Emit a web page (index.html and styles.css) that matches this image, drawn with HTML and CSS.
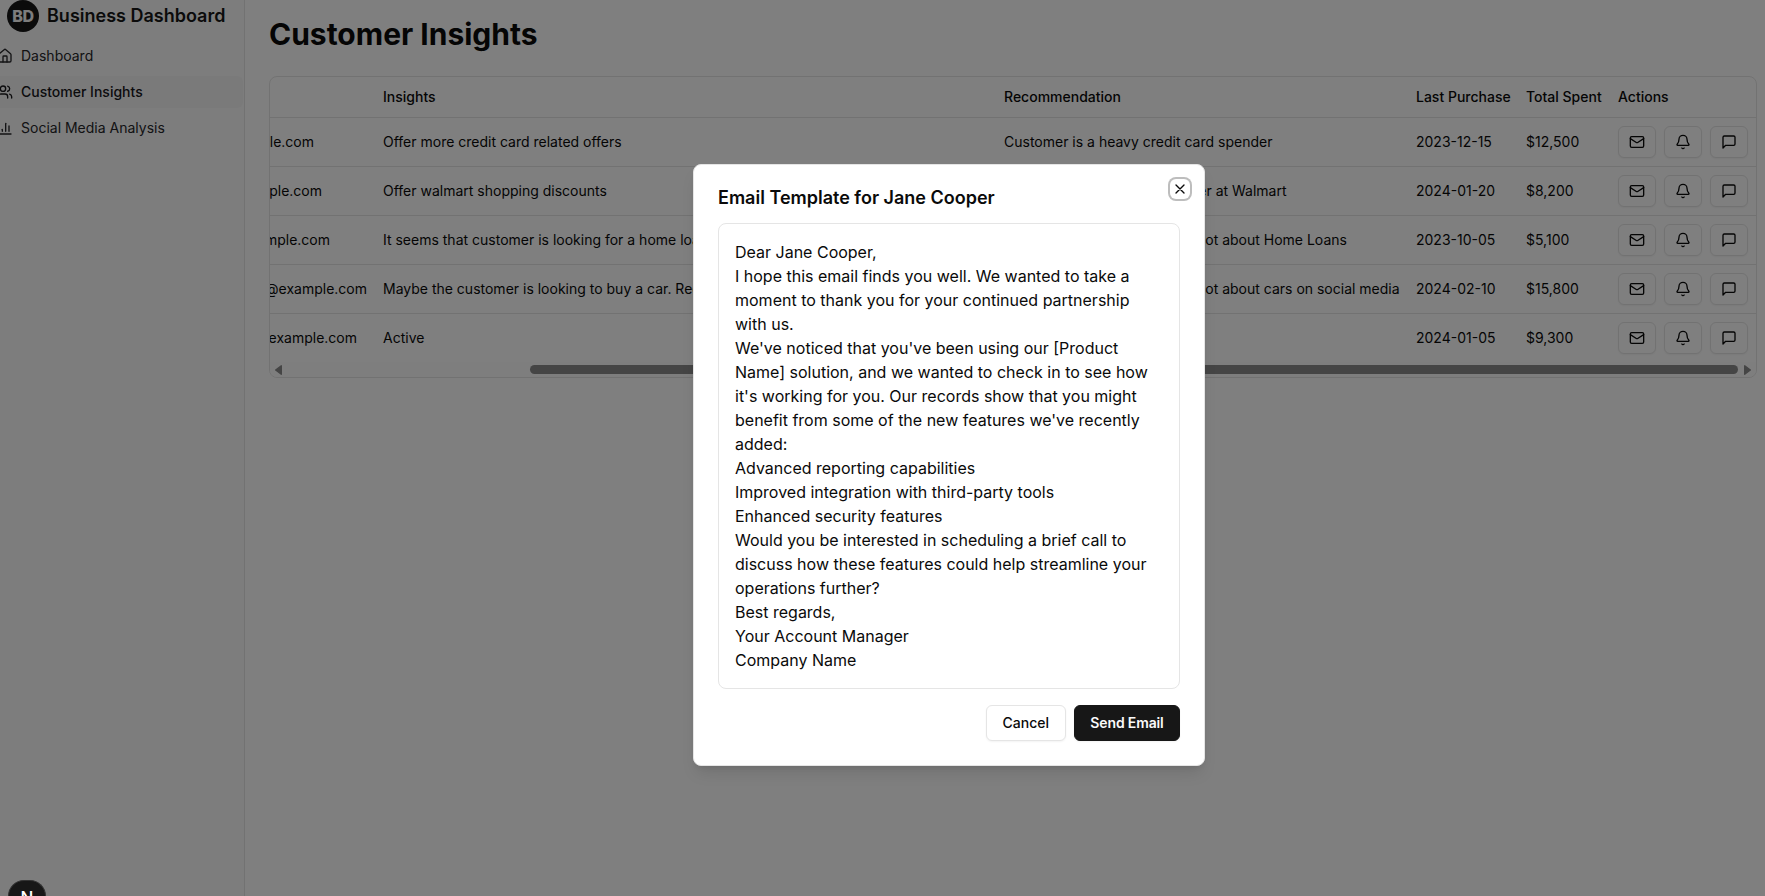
FILE: index.html
```
<!DOCTYPE html>
<html lang="en">
<head>
<meta charset="utf-8">
<title>Business Dashboard</title>
<link rel="stylesheet" href="styles.css">
</head>
<body>
<svg class="sprite" aria-hidden="true">
  <symbol id="mail" viewBox="0 0 24 24"><rect width="20" height="16" x="2" y="4" rx="2"/><path d="m22 7-8.97 5.7a1.94 1.94 0 0 1-2.06 0L2 7"/></symbol>
  <symbol id="bell" viewBox="0 0 24 24"><path d="M10.268 21a2 2 0 0 0 3.464 0"/><path d="M3.262 15.326A1 1 0 0 0 4 17h16a1 1 0 0 0 .74-1.673C19.41 13.956 18 12.499 18 8A6 6 0 0 0 6 8c0 4.499-1.411 5.956-2.738 7.326"/></symbol>
  <symbol id="message" viewBox="0 0 24 24"><path d="M21 15a2 2 0 0 1-2 2H7l-4 4V5a2 2 0 0 1 2-2h14a2 2 0 0 1 2 2z"/></symbol>
</svg>
<div class="app">
  <aside class="sidebar">
    <div class="brand"><span class="avatar">BD</span><span class="brand-name">Business Dashboard</span></div>
    <nav class="menu">
      <a class="menu-item"><svg class="icon" viewBox="0 0 24 24"><path d="M15 21v-8a1 1 0 0 0-1-1h-4a1 1 0 0 0-1 1v8"/><path d="M3 10a2 2 0 0 1 .709-1.528l7-5.999a2 2 0 0 1 2.582 0l7 5.999A2 2 0 0 1 21 10v9a2 2 0 0 1-2 2H5a2 2 0 0 1-2-2z"/></svg>Dashboard</a>
      <a class="menu-item active"><svg class="icon" viewBox="0 0 24 24"><path d="M16 21v-2a4 4 0 0 0-4-4H6a4 4 0 0 0-4 4v2"/><circle cx="9" cy="7" r="4"/><path d="M22 21v-2a4 4 0 0 0-3-3.87"/><path d="M16 3.13a4 4 0 0 1 0 7.75"/></svg>Customer Insights</a>
      <a class="menu-item"><svg class="icon" viewBox="0 0 24 24"><path d="M3 3v16a2 2 0 0 0 2 2h16"/><path d="M18 17V9"/><path d="M13 17V5"/><path d="M8 17v-3"/></svg>Social Media Analysis</a>
    </nav>
  </aside>
  <main class="main">
    <h1 class="page-title">Customer Insights</h1>
    <section class="table-card">
      <div class="row head"><div class="cell"></div><div class="cell">Insights</div><div class="cell">Recommendation</div><div class="cell">Last Purchase</div><div class="cell">Total Spent</div><div class="cell">Actions</div></div>
      <div class="row"><div class="cell email e1">le.com</div><div class="cell">Offer more credit card related offers</div><div class="cell">Customer is a heavy credit card spender</div><div class="cell">2023-12-15</div><div class="cell">$12,500</div><div class="cell actions"><button class="act"><svg class="icon"><use href="#mail"/></svg></button><button class="act"><svg class="icon"><use href="#bell"/></svg></button><button class="act"><svg class="icon"><use href="#message"/></svg></button></div></div>
      <div class="row"><div class="cell email e2">ple.com</div><div class="cell">Offer walmart shopping discounts</div><div class="cell tight">Customer is a frequent shopper at Walmart</div><div class="cell">2024-01-20</div><div class="cell">$8,200</div><div class="cell actions"><button class="act"><svg class="icon"><use href="#mail"/></svg></button><button class="act"><svg class="icon"><use href="#bell"/></svg></button><button class="act"><svg class="icon"><use href="#message"/></svg></button></div></div>
      <div class="row"><div class="cell email e3">mple.com</div><div class="cell">It seems that customer is looking for a home loan</div><div class="cell">Customer has been posting a lot about Home Loans</div><div class="cell">2023-10-05</div><div class="cell">$5,100</div><div class="cell actions"><button class="act"><svg class="icon"><use href="#mail"/></svg></button><button class="act"><svg class="icon"><use href="#bell"/></svg></button><button class="act"><svg class="icon"><use href="#message"/></svg></button></div></div>
      <div class="row"><div class="cell email e4">@example.com</div><div class="cell">Maybe the customer is looking to buy a car. Recommend car loans</div><div class="cell">Customer has been posting a lot about cars on social media</div><div class="cell">2024-02-10</div><div class="cell">$15,800</div><div class="cell actions"><button class="act"><svg class="icon"><use href="#mail"/></svg></button><button class="act"><svg class="icon"><use href="#bell"/></svg></button><button class="act"><svg class="icon"><use href="#message"/></svg></button></div></div>
      <div class="row last"><div class="cell email e5">example.com</div><div class="cell">Active</div><div class="cell"></div><div class="cell">2024-01-05</div><div class="cell">$9,300</div><div class="cell actions"><button class="act"><svg class="icon"><use href="#mail"/></svg></button><button class="act"><svg class="icon"><use href="#bell"/></svg></button><button class="act"><svg class="icon"><use href="#message"/></svg></button></div></div>
      <div class="scrollbar"><svg class="arrow" viewBox="0 0 7 10"><path d="M6.3 .8v8.4L.7 5z"/></svg><div class="track"><div class="thumb"></div></div><svg class="arrow" viewBox="0 0 7 10"><path d="M.7 .8v8.4l5.6-4.2z"/></svg></div>
    </section>
  </main>
</div>
<div class="overlay">
  <div class="dialog">
    <h2 class="dialog-title">Email Template for Jane Cooper</h2>
    <div class="template">Dear Jane Cooper,<br>I hope this email finds you well. We wanted to take a<br>moment to thank you for your continued partnership<br>with us.<br>We've noticed that you've been using our [Product<br>Name] solution, and we wanted to check in to see how<br>it's working for you. Our records show that you might<br>benefit from some of the new features we've recently<br>added:<br>Advanced reporting capabilities<br>Improved integration with third-party tools<br>Enhanced security features<br>Would you be interested in scheduling a brief call to<br>discuss how these features could help streamline your<br>operations further?<br>Best regards,<br>Your Account Manager<br>Company Name</div>
    <div class="dialog-actions"><button class="btn">Cancel</button><button class="btn primary">Send Email</button></div>
    <button class="close" aria-label="Close"><svg class="icon" viewBox="0 0 24 24"><path d="M18 6 6 18M6 6l12 12"/></svg></button>
  </div>
</div>
<div class="dev-badge">N</div>
</body>
</html>
```
FILE: styles.css
```
* { box-sizing: border-box; }
body { margin: 0; height: 896px; overflow: hidden; font-family: Inter, "Liberation Sans", sans-serif; font-size: 14px; line-height: 20px; color: #0a0a0a; background: #fff; }
button { font: inherit; color: inherit; padding: 0; }
.sprite { display: none; }
.icon { width: 16px; height: 16px; flex: none; fill: none; stroke: currentColor; stroke-width: 2; stroke-linecap: round; stroke-linejoin: round; }
.app { display: flex; height: 896px; }
.sidebar { width: 245px; flex: none; background: #fafafa; border-right: 1px solid #e5e5e5; color: #27272a; }
.brand { display: flex; align-items: center; gap: 8px; height: 32px; padding-left: 7px; color: #171717; white-space: nowrap; }
.avatar { display: flex; align-items: center; justify-content: center; width: 32px; height: 32px; border-radius: 50%; background: #171717; color: #fafafa; font-size: 16px; font-weight: 800; letter-spacing: -.02em; }
.brand-name { font-size: 18px; font-weight: 600; line-height: 28px; }
.menu { display: flex; flex-direction: column; gap: 4px; margin: 8px 1px 0 -11px; }
.menu-item { display: flex; align-items: center; gap: 8px; height: 32px; padding: 8px; border-radius: 6px; }
.menu-item.active { background: #f4f4f5; color: #18181b; font-weight: 500; }
.main { flex: 1; min-width: 0; padding: 16px 8px 0 24px; }
.page-title { margin: 0 0 24px; font-size: 30px; line-height: 36px; font-weight: 700; }
.table-card { border: 1px solid #e5e5e5; border-radius: 8px; overflow: hidden; }
.row { display: grid; grid-template-columns: 105px 621px 412px 110px 92px 146px; height: 49px; align-items: center; border-bottom: 1px solid #e5e5e5; white-space: nowrap; }
.row.head { height: 41px; font-weight: 500; }
.row.last { height: 48px; border-bottom: 0; }
.cell { padding: 0 8px; min-width: 0; }
.cell.tight { padding-left: 6px; }
.email { display: flex; justify-content: flex-end; }
.e1 { padding-right: 61px; }
.e2 { padding-right: 53px; }
.e3 { padding-right: 45px; }
.e4 { padding-right: 8px; }
.e5 { padding-right: 18px; }
.actions { display: flex; gap: 8px; }
.act { display: flex; align-items: center; justify-content: center; width: 38px; height: 32px; border: 1px solid #e5e5e5; border-radius: 6px; background: #fff; box-shadow: 0 1px 2px rgba(0,0,0,.05); }
.scrollbar { display: flex; align-items: center; justify-content: space-between; height: 15px; padding: 0 5px; background: #fcfcfc; }
.arrow { width: 7px; height: 10px; fill: #8b8b8b; stroke: #8b8b8b; stroke-width: 1.4; stroke-linejoin: round; }
.track { flex: 1; padding-left: 248px; padding-right: 6px; }
.thumb { height: 9px; border-radius: 5px; background: #8b8b8b; }
.overlay { position: absolute; inset: 0; height: 896px; background: rgba(0,0,0,.5); }
.dialog { position: absolute; left: 693px; top: 164px; width: 512px; display: flex; flex-direction: column; gap: 16px; padding: 24px; border: 1px solid #e5e5e5; border-radius: 8px; background: #fff; box-shadow: 0 10px 15px -3px rgba(0,0,0,.1), 0 4px 6px -4px rgba(0,0,0,.1); }
.dialog-title { margin: 0; font-size: 18px; line-height: 18px; font-weight: 600; }
.template { padding: 16px; border: 1px solid #e5e5e5; border-radius: 8px; font-size: 16px; line-height: 24px; white-space: nowrap; }
.dialog-actions { display: flex; justify-content: flex-end; gap: 8px; }
.btn { height: 36px; padding: 0 16px; border: 1px solid #e5e5e5; border-radius: 6px; background: #fff; font-weight: 500; box-shadow: 0 1px 2px rgba(0,0,0,.05); }
.btn.primary { padding: 0 14px; width: 106px; border-color: #171717; background: #171717; color: #fafafa; font-weight: 600; letter-spacing: -.01em; }
.close { position: absolute; top: 16px; right: 16px; display: flex; width: 16px; height: 16px; border: 0; border-radius: 4px; background: #fff; box-shadow: 0 0 0 2px #fff, 0 0 0 4px #bdbdbd; }
.dev-badge { position: absolute; left: 8px; top: 880px; width: 38px; height: 16px; overflow: hidden; border: 1px solid #333; border-bottom: 0; border-radius: 19px 19px 0 0; background: #171717; color: #fff; text-align: center; font-size: 17px; font-weight: 500; line-height: 34px; }
```
